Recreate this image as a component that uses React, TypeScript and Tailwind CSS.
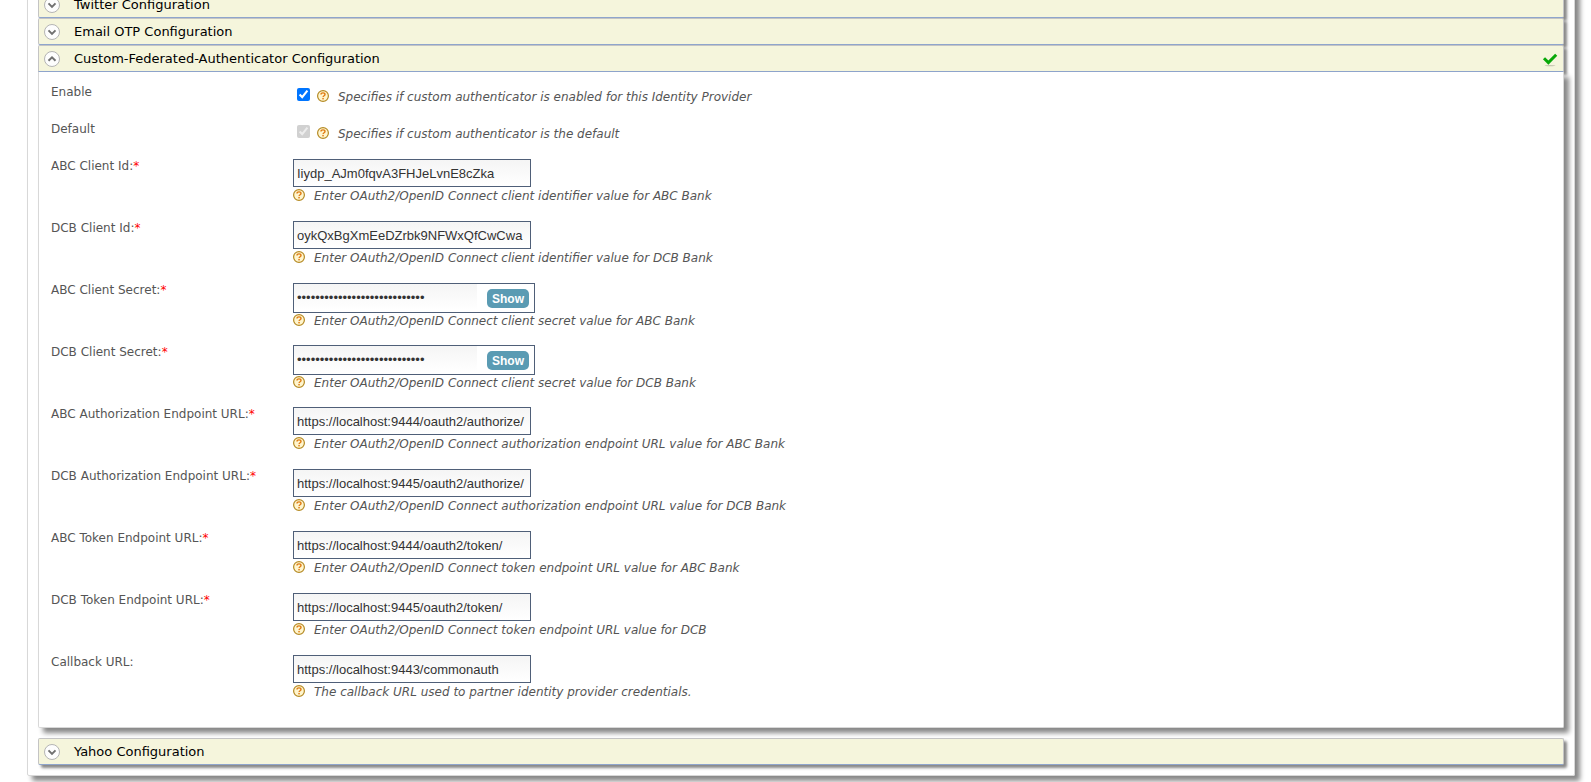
import { useState } from 'react';

type Field = {
  id: string;
  label: string;
  value: string;
  help: string;
  required?: boolean;
  secret?: boolean;
};

const fields: Field[] = [
  { id: 'abc-client-id', label: 'ABC Client Id:', value: 'Iiydp_AJm0fqvA3FHJeLvnE8cZka', help: 'Enter OAuth2/OpenID Connect client identifier value for ABC Bank', required: true },
  { id: 'dcb-client-id', label: 'DCB Client Id:', value: 'oykQxBgXmEeDZrbk9NFWxQfCwCwa', help: 'Enter OAuth2/OpenID Connect client identifier value for DCB Bank', required: true },
  { id: 'abc-secret', label: 'ABC Client Secret:', value: 'abcdefghijklmnopqrstuvwxyz12', help: 'Enter OAuth2/OpenID Connect client secret value for ABC Bank', required: true, secret: true },
  { id: 'dcb-secret', label: 'DCB Client Secret:', value: 'abcdefghijklmnopqrstuvwxyz12', help: 'Enter OAuth2/OpenID Connect client secret value for DCB Bank', required: true, secret: true },
  { id: 'abc-authz', label: 'ABC Authorization Endpoint URL:', value: 'https://localhost:9444/oauth2/authorize/', help: 'Enter OAuth2/OpenID Connect authorization endpoint URL value for ABC Bank', required: true },
  { id: 'dcb-authz', label: 'DCB Authorization Endpoint URL:', value: 'https://localhost:9445/oauth2/authorize/', help: 'Enter OAuth2/OpenID Connect authorization endpoint URL value for DCB Bank', required: true },
  { id: 'abc-token', label: 'ABC Token Endpoint URL:', value: 'https://localhost:9444/oauth2/token/', help: 'Enter OAuth2/OpenID Connect token endpoint URL value for ABC Bank', required: true },
  { id: 'dcb-token', label: 'DCB Token Endpoint URL:', value: 'https://localhost:9445/oauth2/token/', help: 'Enter OAuth2/OpenID Connect token endpoint URL value for DCB', required: true },
  { id: 'callback', label: 'Callback URL:', value: 'https://localhost:9443/commonauth', help: 'The callback URL used to partner identity provider credentials.' },
];

function HelpIcon() {
  return (
    <svg width="12" height="12" viewBox="0 0 12 12" className="shrink-0" aria-hidden="true">
      <circle cx="6" cy="6" r="5.4" fill="#fff6cf" stroke="#b58a24" strokeWidth="1.2" />
      <path d="M4 4.6c0-1.2.9-1.7 2-1.7s2 .6 2 1.6c0 1.3-1.9 1.2-1.9 2.6" fill="none" stroke="#e07b12" strokeWidth="1.4" />
      <rect x="5.3" y="7.9" width="1.5" height="1.5" fill="#e07b12" />
    </svg>
  );
}

function Help({ text }: { text: string }) {
  return (
    <p className="flex gap-[9px] leading-4 italic">
      <span className="pt-px">
        <HelpIcon />
      </span>
      <span>{text}</span>
    </p>
  );
}

function SectionHeader({ title, open, enabled }: { title: string; open?: boolean; enabled?: boolean }) {
  return (
    <h2>
      <button
        type="button"
        aria-expanded={!!open}
        className={`flex h-[27px] w-full items-center border border-[#c4c4c4] border-b-[#8fa5cc] bg-[#f5f5dc] px-[5px] text-left text-[13px] text-black shadow-[3px_3px_3px_#888888] ${open ? 'rounded-t-xs' : 'rounded-xs'}`}
      >
        <svg width="16" height="16" viewBox="0 0 16 16" className="mr-3.5 shrink-0" aria-hidden="true">
          <circle cx="8" cy="8" r="7.5" fill="#fdfdfd" stroke="#b4b4b4" />
          <path d={open ? 'M4.5 9.8 8 6.3l3.5 3.5' : 'M4.5 6.4 8 9.9l3.5-3.5'} fill="none" stroke="#707070" strokeWidth="2" />
        </svg>
        <span className="flex-1 leading-4">{title}</span>
        {enabled && (
          <svg width="16" height="16" viewBox="0 0 16 16" role="img" aria-label="Enabled">
            <path d="M2 7.2 6.4 11.6 14.2 3.8" fill="none" stroke="#08a808" strokeWidth="3" />
            <ellipse cx="8" cy="14.6" rx="5.5" ry="0.7" fill="#c4c4b0" />
          </svg>
        )}
      </button>
    </h2>
  );
}

function CheckRow({ id, label, help, disabled }: { id: string; label: string; help: string; disabled?: boolean }) {
  return (
    <div className="flex h-[37px] pt-1">
      <label htmlFor={id} className="w-[242px] shrink-0 leading-4">
        {label}
      </label>
      <div className="flex items-start gap-[7px] pl-1">
        <input id={id} type="checkbox" defaultChecked disabled={disabled} className="mt-1 size-[13px]" />
        <div className="pt-[5px]">
          <Help text={help} />
        </div>
      </div>
    </div>
  );
}

function FieldRow({ field }: { field: Field }) {
  const [shown, setShown] = useState(false);
  const inputStyle = "bg-linear-to-b from-[#f5f5f5] to-white px-[3px] font-['Liberation_Sans',sans-serif] text-[13px] text-[#333333]";

  return (
    <div className="flex h-[62px] pt-1">
      <label htmlFor={field.id} className="w-[242px] shrink-0 leading-4">
        {field.label}
        {field.required && <span className="text-[#ff0000]">*</span>}
      </label>
      <div className="pt-px">
        {field.secret ? (
          <div className="flex h-[30px] w-[242px] items-start justify-between border border-[#4f5f78] pr-[5px]">
            <input id={field.id} type={shown ? 'text' : 'password'} defaultValue={field.value} className={`h-[26px] w-[183px] ${inputStyle}`} />
            <button
              type="button"
              onClick={() => setShown(!shown)}
              className="mt-[5px] h-[19px] w-[42px] rounded-[5px] bg-[#5a9bb3] font-['Liberation_Sans',sans-serif] text-[12px] leading-4 font-bold text-white"
            >
              {shown ? 'Hide' : 'Show'}
            </button>
          </div>
        ) : (
          <input id={field.id} type="text" defaultValue={field.value} className={`mb-px block h-7 w-[238px] border border-[#4f5f78] ${inputStyle}`} />
        )}
        <Help text={field.help} />
      </div>
    </div>
  );
}

export default function App() {
  return (
    <div className="overflow-hidden bg-white pb-1.5 pr-4 pl-[27px] font-['DejaVu_Sans',sans-serif] text-[12px] text-[#555555]">
      <main className="-mt-5 rounded-xs border border-[#d8d8d8] px-2.5 pt-2.5 pb-[10px] shadow-[5px_5px_5px_#888888]">
        <SectionHeader title="Twitter Configuration" />
        <SectionHeader title="Email OTP Configuration" />
        <SectionHeader title="Custom-Federated-Authenticator Configuration" open enabled />
        <form className="mb-2.5 rounded-b-xs border border-t-0 border-[#d8d8d8] bg-white px-3 pt-2 pb-[15px] shadow-[5px_5px_5px_#888888]">
          <CheckRow id="enable" label="Enable" help="Specifies if custom authenticator is enabled for this Identity Provider" />
          <CheckRow id="default" label="Default" help="Specifies if custom authenticator is the default" disabled />
          {fields.map((field) => (
            <FieldRow key={field.id} field={field} />
          ))}
        </form>
        <SectionHeader title="Yahoo Configuration" />
      </main>
    </div>
  );
}
